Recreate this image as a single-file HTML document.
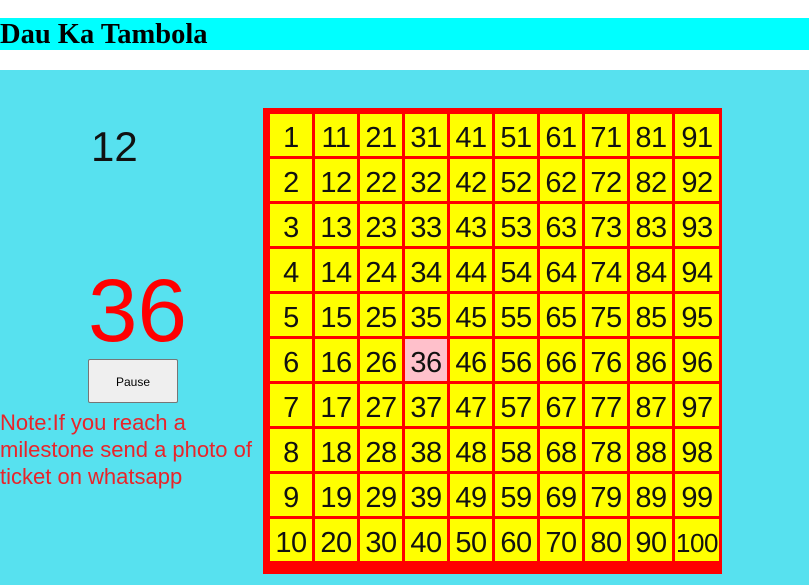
<!DOCTYPE html>
<html><head><meta charset="utf-8"><style>
html,body{margin:0;padding:0;width:809px;height:585px;overflow:hidden;background:#fff;font-family:"Liberation Sans",sans-serif}
#hdr{position:absolute;left:0;top:18px;width:809px;height:32px;background:#00ffff;font:bold 28.5px/34px "Liberation Serif",serif;color:#000}
#main{position:absolute;left:0;top:70px;width:809px;height:515px;background:#57e1ef}
.a{position:absolute}
#board{position:absolute;left:263px;top:108px;width:459px;height:466px;background:#f00}
.c{position:absolute;width:42px;height:42px;background:#ff0;color:#111;font-size:29px;line-height:48px;text-align:center;white-space:nowrap;letter-spacing:-0.5px}
.c.w{width:44px}
</style></head><body>
<div id="hdr">Dau Ka Tambola</div>
<div id="main"></div>
<div class="a" style="left:91px;top:122px;font-size:42px;line-height:50px;color:#111">12</div>
<div class="a" style="left:88px;top:260px;font-size:89px;line-height:100px;color:#f00">36</div>
<div class="a" style="left:88px;top:359px;width:88px;height:42px;background:#efefef;border:1px solid #767676;border-radius:2px;font-size:12px;line-height:44px;text-align:center;color:#000">Pause</div>
<div class="a" style="left:0;top:409px;width:262px;font-size:22px;line-height:27px;color:#e8242a">Note:If you reach a milestone send a photo of ticket on whatsapp</div>
<div id="board"></div>
<div id="cells"></div>
<script>
var h='';var xs=[270,315,360,405,450,495,540,585,630,675];
for(var c=0;c<10;c++)for(var r=0;r<10;r++){var n=c*10+r+1;
h+='<div class="c'+(c==9?' w':'')+'" style="left:'+xs[c]+'px;top:'+(114+r*45)+'px;'+(n==36?'background:#ffc0cb;':'')+(n==100?'font-size:26px;':'')+'">'+n+'</div>';}
document.getElementById('cells').innerHTML=h;
</script>
</body></html>
